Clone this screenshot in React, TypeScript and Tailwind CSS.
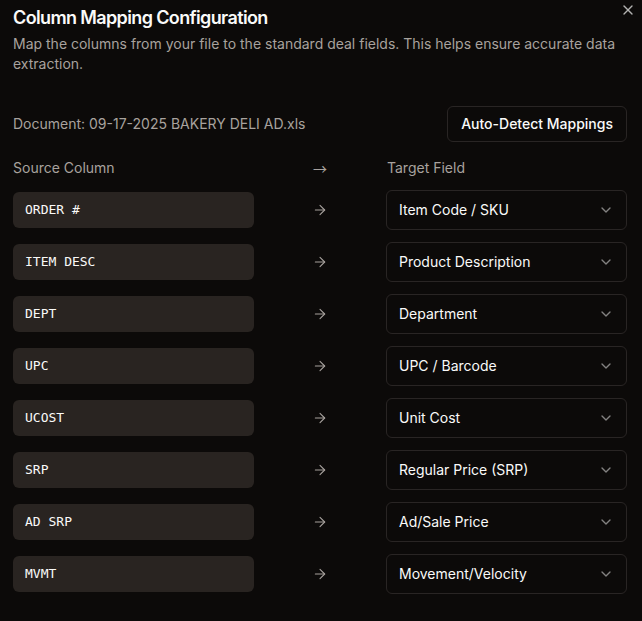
import React from "react";

const rows: [string, string][] = [
  ["ORDER #", "Item Code / SKU"],
  ["ITEM DESC", "Product Description"],
  ["DEPT", "Department"],
  ["UPC", "UPC / Barcode"],
  ["UCOST", "Unit Cost"],
  ["SRP", "Regular Price (SRP)"],
  ["AD SRP", "Ad/Sale Price"],
  ["MVMT", "Movement/Velocity"],
];

function ArrowRight() {
  return (
    <svg width="16" height="16" viewBox="0 0 24 24" fill="none" stroke="currentColor" strokeWidth="1.6" strokeLinecap="round" strokeLinejoin="round">
      <path d="M5 12h14" />
      <path d="m12 5 7 7-7 7" />
    </svg>
  );
}

function Chevron() {
  return (
    <svg width="16" height="16" viewBox="0 0 24 24" fill="none" stroke="currentColor" strokeWidth="2" strokeLinecap="round" strokeLinejoin="round">
      <path d="m6 9 6 6 6-6" />
    </svg>
  );
}

export default function App() {
  return (
    <div
      className="relative w-[642px] h-[621px] bg-[#0c0a09] text-[#fafaf9] overflow-hidden"
      style={{ fontFamily: "Inter, 'Noto Sans', sans-serif" }}
    >
      <button className="absolute right-[6px] top-[2px] text-[#fafaf9] opacity-70">
        <svg width="16" height="16" viewBox="0 0 24 24" fill="none" stroke="currentColor" strokeWidth="2" strokeLinecap="round" strokeLinejoin="round">
          <path d="M18 6 6 18" />
          <path d="m6 6 12 12" />
        </svg>
      </button>
      <div className="pl-[13px] pr-[15px] pt-[4px]">
        <h2 className="text-lg leading-7 font-semibold tracking-[-0.035em]">Column Mapping Configuration</h2>
        <p className="mt-[2px] text-sm leading-5 text-[#a8a29e]">
          Map the columns from your file to the standard deal fields. This helps ensure accurate data extraction.
        </p>
        <div className="mt-[32px] flex items-center justify-between h-[36px]">
          <span className="text-sm text-[#a8a29e]">Document: 09-17-2025 BAKERY DELI AD.xls</span>
          <button className="h-[36px] px-[13px] rounded-md border border-[#292524] text-sm font-medium text-[#fafaf9]">
            Auto-Detect Mappings
          </button>
        </div>
        <div className="mt-[16px] grid grid-cols-[241px_1fr_241px] items-center text-sm leading-5 text-[#a8a29e]">
          <span>Source Column</span>
          <span className="text-center text-sm leading-5" style={{ fontFamily: "'Noto Sans CJK JP', sans-serif" }}>→</span>
          <span className="pl-[1px]">Target Field</span>
        </div>
        <div className="mt-[12px] flex flex-col gap-[12px]">
          {rows.map(([src, tgt]) => (
            <div key={src} className="grid grid-cols-[241px_1fr_241px] items-center">
              <div
                className="h-[36px] rounded-md bg-[#292421] px-3 flex items-center text-[13px] text-[#fafaf9]"
                style={{ fontFamily: "'DejaVu Sans Mono', 'Liberation Mono', monospace" }}
              >
                {src}
              </div>
              <div className="flex justify-center text-[#a8a29e]">
                <ArrowRight />
              </div>
              <div className="h-[40px] rounded-md border border-[#292524] px-3 flex items-center justify-between text-sm text-[#fafaf9]">
                <span>{tgt}</span>
                <span className="opacity-50">
                  <Chevron />
                </span>
              </div>
            </div>
          ))}
        </div>
      </div>
    </div>
  );
}
